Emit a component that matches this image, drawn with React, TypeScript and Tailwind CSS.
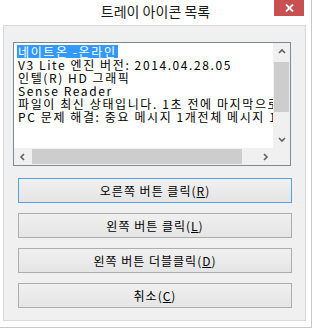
import React from "react";

const items = [
  "네이트온 -온라인",
  "V3 Lite 엔진 버전: 2014.04.28.05",
  "인텔(R) HD 그래픽",
  "Sense Reader",
  "파일이 최신 상태입니다. 1초 전에 마지막으로 검사했습니다.",
  "PC 문제 해결: 중요 메시지 1개전체 메시지 1개",
];

const buttons = [
  { pre: "오른쪽 버튼 클릭(", key: "R", focused: true },
  { pre: "왼쪽 버튼 클릭(", key: "L", focused: false },
  { pre: "왼쪽 버튼 더블클릭(", key: "D", focused: false },
  { pre: "취소(", key: "C", focused: false },
];

const Chevron = ({ dir }: { dir: "up" | "down" | "left" | "right" }) => {
  const paths: Record<string, string> = {
    up: "M1 5 L4 2 L7 5",
    down: "M1 2 L4 5 L7 2",
    left: "M5 1 L2 4 L5 7",
    right: "M3 1 L6 4 L3 7",
  };
  return (
    <svg width="8" height="8" viewBox="0 0 8 8">
      <path d={paths[dir]} fill="none" stroke="#606060" strokeWidth="1.6" />
    </svg>
  );
};

export default function App() {
  return (
    <div className="w-[312px] h-[328px] bg-white border-r border-b border-[#c9c9c9] flex flex-col relative font-['Noto_Sans_CJK_KR',sans-serif] text-black">
      {/* Title bar */}
      <div className="h-[25px] flex justify-center pt-[1px]">
        <span className="text-[14px] leading-[20px] text-[#1a1a1a]">트레이 아이콘 목록</span>
      </div>
      <div className="absolute right-[7px] top-0 w-[30px] h-[16px] bg-[#c75050] flex items-center justify-center">
        <svg width="9" height="8" viewBox="0 0 9 8">
          <path d="M1 0.5 L8 7.5 M8 0.5 L1 7.5" stroke="#fff" strokeWidth="1.8" />
        </svg>
      </div>

      {/* Client area */}
      <div className="ml-[3px] w-[303px] h-[296px] border border-[#d9d9d9] bg-[#f0f0f0] pl-[9px] pt-[16px]">
        {/* List box */}
        <div className="w-[278px] h-[124px] border border-[#828790] bg-white grid grid-cols-[1fr_17px] grid-rows-[1fr_17px]">
          <div className="overflow-hidden pl-[3px] pt-[2px] text-[12px] leading-[13px] tracking-[1.6px]">
            {items.map((t, i) => (
              <div key={i} className="whitespace-nowrap h-[13px]">
                {i === 0 ? (
                  <span className="bg-[#3399ff] text-white px-[1px] inline-block h-[13px]">{t}</span>
                ) : (
                  <span className="px-[1px]">{t}</span>
                )}
              </div>
            ))}
          </div>
          <div className="bg-[#f0f0f0] flex flex-col">
            <div className="h-[17px] flex items-center justify-center">
              <Chevron dir="up" />
            </div>
            <div className="flex-1 pt-[2px]">
              <div className="mx-[1px] h-[50px] bg-[#cdcdcd]" />
            </div>
            <div className="h-[17px] flex items-center justify-center">
              <Chevron dir="down" />
            </div>
          </div>
          <div className="bg-[#f0f0f0] flex">
            <div className="w-[17px] flex items-center justify-center">
              <Chevron dir="left" />
            </div>
            <div className="flex-1 pl-[1px]">
              <div className="my-[1px] h-[15px] w-[210px] bg-[#cdcdcd]" />
            </div>
            <div className="w-[17px] flex items-center justify-center">
              <Chevron dir="right" />
            </div>
          </div>
          <div className="bg-[#f0f0f0]" />
        </div>

        {/* Buttons */}
        <div className="ml-[5px] mt-[12px] flex flex-col gap-[10px]">
          {buttons.map((b) => (
            <button
              key={b.key}
              className={`w-[274px] h-[25px] border ${b.focused ? "border-[#5b9fe3]" : "border-[#adadad]"} bg-gradient-to-b from-[#f0f0f0] to-[#e5e5e5] text-[12px] leading-[13px] tracking-[1px] flex items-center justify-center`}
            >
              <span>
                {b.pre}
                <span className="underline">{b.key}</span>)
              </span>
            </button>
          ))}
        </div>
      </div>
    </div>
  );
}
